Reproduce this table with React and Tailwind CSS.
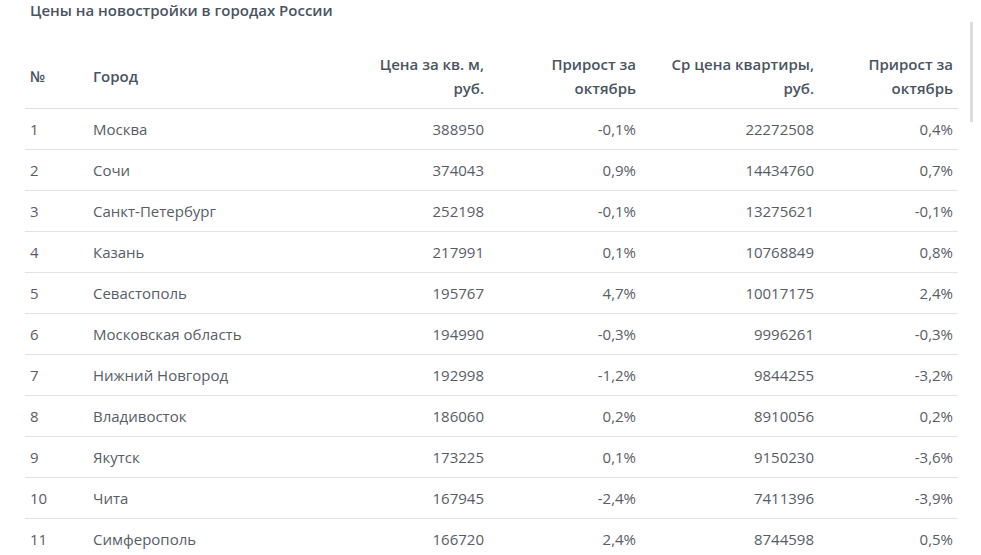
import React from 'react';

const rows = [
  [1, 'Москва', '388950', '-0,1%', '22272508', '0,4%'],
  [2, 'Сочи', '374043', '0,9%', '14434760', '0,7%'],
  [3, 'Санкт-Петербург', '252198', '-0,1%', '13275621', '-0,1%'],
  [4, 'Казань', '217991', '0,1%', '10768849', '0,8%'],
  [5, 'Севастополь', '195767', '4,7%', '10017175', '2,4%'],
  [6, 'Московская область', '194990', '-0,3%', '9996261', '-0,3%'],
  [7, 'Нижний Новгород', '192998', '-1,2%', '9844255', '-3,2%'],
  [8, 'Владивосток', '186060', '0,2%', '8910056', '0,2%'],
  [9, 'Якутск', '173225', '0,1%', '9150230', '-3,6%'],
  [10, 'Чита', '167945', '-2,4%', '7411396', '-3,9%'],
  [11, 'Симферополь', '166720', '2,4%', '8744598', '0,5%'],
];

export default function App() {
  return (
    <div className="relative w-[981px] h-[555px] overflow-hidden bg-white font-['Open_Sans',sans-serif]">
      {/* scroll thumb */}
      <div className="absolute left-[970px] top-[22px] w-[3px] h-[100px] bg-[#dcdcdc]" />

      <div className="pl-[25px]">
        <h2 className="pl-[5px] text-[15px] leading-5 font-semibold text-[#4a5461]">
          Цены на новостройки в городах России
        </h2>

        <table className="mt-[24px] w-[933px] table-fixed border-collapse text-[15px] leading-6">
          <colgroup>
            <col className="w-[63px]" />
            <col className="w-[276px]" />
            <col className="w-[125px]" />
            <col className="w-[152px]" />
            <col className="w-[178px]" />
            <col className="w-[139px]" />
          </colgroup>
          <thead>
            <tr className="border-b border-[#dedede] text-[#4a5461] font-semibold">
              <th className="px-[5px] py-2 text-left align-middle font-semibold">№</th>
              <th className="px-[5px] py-2 text-left align-middle font-semibold">Город</th>
              <th className="px-[5px] py-2 text-right font-semibold">Цена за кв. м,<br />руб.</th>
              <th className="px-[5px] py-2 text-right font-semibold">Прирост за<br />октябрь</th>
              <th className="px-[5px] py-2 text-right font-semibold">Ср цена квартиры,<br />руб.</th>
              <th className="px-[5px] py-2 text-right font-semibold">Прирост за<br />октябрь</th>
            </tr>
          </thead>
          <tbody className="text-[#575d66]">
            {rows.map((r) => (
              <tr key={r[0]} className="border-b border-[#e3e3e3]">
                <td className="px-[5px] py-2">{r[0]}</td>
                <td className="px-[5px] py-2">{r[1]}</td>
                <td className="px-[5px] py-2 text-right">{r[2]}</td>
                <td className="px-[5px] py-2 text-right">{r[3]}</td>
                <td className="px-[5px] py-2 text-right">{r[4]}</td>
                <td className="px-[5px] py-2 text-right">{r[5]}</td>
              </tr>
            ))}
          </tbody>
        </table>
      </div>
    </div>
  );
}
